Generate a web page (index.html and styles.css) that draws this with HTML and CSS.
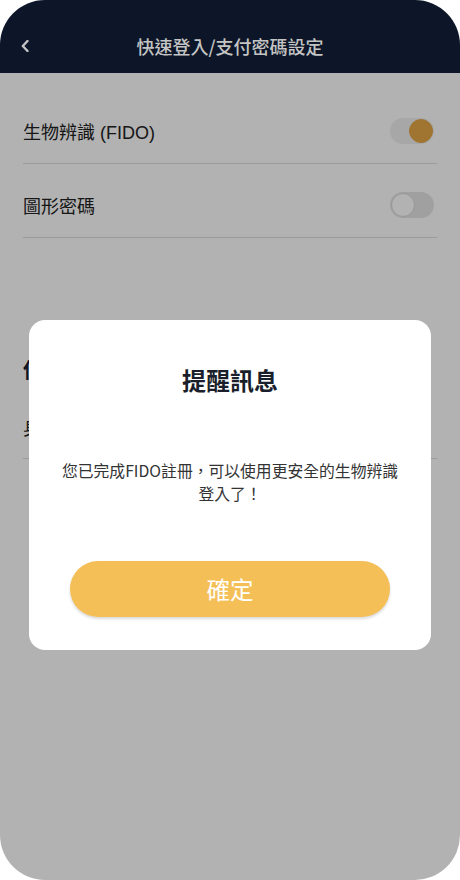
FILE: index.html
```html
<!DOCTYPE html>
<html lang="zh-Hant">

<head>
  <meta charset="UTF-8">
  <title>快速登入/支付密碼設定</title>
  <link rel="stylesheet" href="styles.css">
</head>

<body>

  <div class="phone">
    <header class="topbar">
      <svg class="back" viewBox="0 0 8 12" width="8" height="12">
        <path d="M 6.5 1 L 1.8 6 L 6.5 11" fill="none" stroke="#c4c4c4" stroke-width="2.4" stroke-linecap="round" stroke-linejoin="round" />
      </svg>
      <h1 class="title">快速登入/支付密碼設定</h1>
    </header>

    <main class="list">
      <div class="row">
        <span class="row-label">生物辨識 (FIDO)</span>
        <span class="switch on"><span class="knob"></span></span>
      </div>
      <div class="row">
        <span class="row-label">圖形密碼</span>
        <span class="switch"><span class="knob"></span></span>
      </div>

      <section class="group">
        <h2 class="group-title">使用者代號/密碼</h2>
        <div class="row plain">
          <span class="row-label">身分證字號登入</span>
        </div>
      </section>
    </main>

    <!-- 遮罩 + 提醒視窗 -->
    <div class="overlay">
      <div class="dialog">
        <h3 class="dialog-title">提醒訊息</h3>
        <p class="dialog-text">您已完成FIDO註冊，可以使用更安全的生物辨識登入了！</p>
        <button class="btn-ok">確定</button>
      </div>
    </div>
  </div>

</body>

</html>
```

FILE: styles.css
```css
body {
  margin: 0;
  background: #fff;
  font-family: "Noto Sans CJK TC", sans-serif;
}

.phone {
  width: 460px;
  height: 880px;
  border-radius: 45px;
  overflow: hidden;
  position: relative;
  background: #fff;
}

.topbar {
  height: 73px;
  box-sizing: border-box;
  padding-top: 18px;
  background: #0c1628;
  display: flex;
  align-items: center;
  justify-content: center;
  position: relative;
}

.topbar .back {
  position: absolute;
  left: 21px;
  top: 40px;
}

.title {
  margin: 0;
  font-size: 18px;
  font-weight: 500;
  color: #c4c4c4;
  line-height: 1;
}

.list {
  padding: 17px 23px 0;
}

.row {
  display: flex;
  align-items: center;
  justify-content: space-between;
  height: 26px;
  padding: 28px 0 19px;
  border-bottom: 1px solid #dedede;
}

.row-label {
  font-family: "Liberation Sans", "Noto Sans CJK TC", sans-serif;
  font-size: 18px;
  color: #222;
}

.switch {
  width: 44px;
  height: 26px;
  margin-right: 3px;
  border-radius: 13px;
  background: #e6e6e6;
  display: flex;
  align-items: center;
  padding: 0 1px;
  box-sizing: border-box;
}

.switch .knob {
  width: 24px;
  height: 24px;
  border-radius: 50%;
  background: #fff;
  border: 1px solid #d8d8d8;
  box-sizing: border-box;
}

.switch.on {
  background: #f0f0f0;
  justify-content: flex-end;
}

.switch.on .knob {
  background: #e5a647;
  border-color: #e5a647;
}

.group {
  margin-top: 118px;
}

.group-title {
  margin: 0;
  font-size: 20px;
  font-weight: 700;
  color: #1a2233;
  line-height: 28px;
}

.row.plain {
  padding: 30px 0 18px;
}

.overlay {
  position: absolute;
  top: 73px;
  left: 0;
  right: 0;
  bottom: 0;
  background: rgba(0, 0, 0, 0.3);
  display: flex;
  justify-content: center;
  align-items: flex-start;
  padding-top: 247px;
}

.dialog {
  width: 402px;
  box-sizing: border-box;
  background: #fff;
  border-radius: 16px;
  padding: 43px 30px 33px;
  text-align: center;
  display: flex;
  flex-direction: column;
  align-items: center;
}

.dialog-title {
  margin: 0;
  font-size: 24px;
  font-weight: 700;
  line-height: 34px;
  color: #1a1f2b;
}

.dialog-text {
  margin: 62px 0 0;
  font-size: 15.8px;
  line-height: 23px;
  color: #333;
}

.btn-ok {
  margin-top: 56px;
  width: 320px;
  height: 56px;
  border: none;
  border-radius: 28px;
  background: #f4bf57;
  color: #fff;
  font-family: "Noto Sans CJK TC", sans-serif;
  font-size: 23.5px;
  box-shadow: 0 2px 3px rgba(0, 0, 0, 0.15);
}
```
